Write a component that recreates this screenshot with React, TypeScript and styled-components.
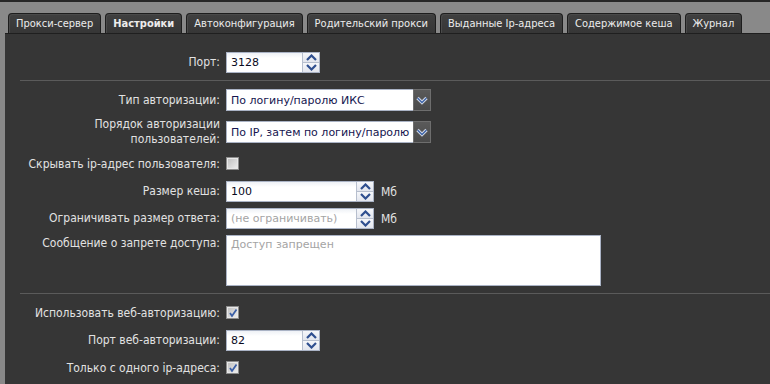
import React from "react";
import styled, { createGlobalStyle } from "styled-components";

const GlobalStyle = createGlobalStyle`
  html, body {
    margin: 0;
    padding: 0;
    background: #898989;
  }
  * {
    box-sizing: border-box;
  }
`;

const tabs = [
  "Прокси-сервер",
  "Настройки",
  "Автоконфигурация",
  "Родительский прокси",
  "Выданные Ip-адреса",
  "Содержимое кеша",
  "Журнал",
];

const Spin = () => (
  <Spinner>
    <SpinHalf>
      <svg width="11" height="7" viewBox="0 0 11 7">
        <path d="M1 6 L5.5 1.5 L10 6" fill="none" stroke="#2f4f8f" strokeWidth="2.2" />
      </svg>
    </SpinHalf>
    <SpinHalf $bottom>
      <svg width="11" height="7" viewBox="0 0 11 7">
        <path d="M1 1 L5.5 5.5 L10 1" fill="none" stroke="#2f4f8f" strokeWidth="2.2" />
      </svg>
    </SpinHalf>
  </Spinner>
);

const NumberField = ({
  value,
  width,
  muted,
}: {
  value: string;
  width: number;
  muted?: boolean;
}) => (
  <NumberBox $width={width}>
    <BoxText $muted={muted}>{value}</BoxText>
    <Spin />
  </NumberBox>
);

const Select = ({ value }: { value: string }) => (
  <SelectBox>
    <SelectText>{value}</SelectText>
    <SelectArrow>
      <svg width="12" height="9" viewBox="0 0 12 9">
        <path d="M1.5 2 L6 6.5 L10.5 2" fill="none" stroke="#d8dde8" strokeWidth="3.2" />
        <path d="M1.5 2 L6 6.5 L10.5 2" fill="none" stroke="#3d64a8" strokeWidth="1.4" />
      </svg>
    </SelectArrow>
  </SelectBox>
);

const Check = ({ checked }: { checked?: boolean }) => (
  <CheckBox>
    {checked && (
      <svg width="10" height="10" viewBox="0 0 10 10">
        <path d="M2 5 L4 8 L8.5 1.5" fill="none" stroke="#3b5fa6" strokeWidth="1.8" />
      </svg>
    )}
  </CheckBox>
);

const App = () => {
  return (
    <Page>
      <GlobalStyle />
      <TabBar>
        {tabs.map((t) => (
          <Tab key={t} $active={t === "Настройки"}>
            {t}
          </Tab>
        ))}
      </TabBar>
      <Panel>
        <Form>
          <Label>Порт:</Label>
          <Field>
            <NumberField value="3128" width={94} />
          </Field>

          <Separator />

          <Label>Тип авторизации:</Label>
          <Field>
            <Select value="По логину/паролю ИКС" />
          </Field>

          <Label>
            Порядок авторизации
            <br />
            пользователей:
          </Label>
          <Field>
            <Select value="По IP, затем по логину/паролю" />
          </Field>

          <Label>Скрывать ip-адрес пользователя:</Label>
          <Field>
            <Check />
          </Field>

          <Label>Размер кеша:</Label>
          <Field>
            <NumberField value="100" width={148} />
            <Unit>Мб</Unit>
          </Field>

          <Label>Ограничивать размер ответа:</Label>
          <Field>
            <NumberField value="(не ограничивать)" width={148} muted />
            <Unit>Мб</Unit>
          </Field>

          <Label $top>Сообщение о запрете доступа:</Label>
          <Field>
            <TextArea readOnly placeholder="Доступ запрещен" />
          </Field>

          <Separator />

          <Label>Использовать веб-авторизацию:</Label>
          <Field>
            <Check checked />
          </Field>

          <Label>Порт веб-авторизации:</Label>
          <Field>
            <NumberField value="82" width={94} />
          </Field>

          <Label>Только с одного ip-адреса:</Label>
          <Field>
            <Check checked />
          </Field>
        </Form>
      </Panel>
    </Page>
  );
};

export default App;

const Page = styled.div`
  min-height: 100vh;
  border-top: 2px solid #262626;
  display: flex;
  flex-direction: column;
  font-family: "DejaVu Sans Condensed", "DejaVu Sans", sans-serif;
  font-stretch: condensed;
`;

const TabBar = styled.div`
  display: flex;
  gap: 4px;
  padding: 11px 0 0 8px;
`;

const Tab = styled.div<{ $active?: boolean }>`
  height: 20px;
  padding: 0 7px;
  display: flex;
  align-items: center;
  font-size: 11px;
  font-weight: ${(p) => (p.$active ? 700 : 400)};
  color: #ececec;
  background: linear-gradient(#404040, #363636);
  border: 1px solid #1d1d1d;
  border-bottom: none;
  border-radius: 4px 4px 0 0;
  box-shadow: inset 1px 1px 0 #4a4a4a;
  white-space: nowrap;
`;

const Panel = styled.div`
  flex: 1;
  margin-left: 5px;
  background: #363636;
  border-top: 1px solid #1f1f1f;
  padding-top: 18px;
`;

const Form = styled.div`
  display: grid;
  grid-template-columns: 215px 1fr;
  column-gap: 6px;
  row-gap: 6px;
  align-items: center;
`;

const Label = styled.div<{ $top?: boolean }>`
  text-align: right;
  align-self: ${(p) => (p.$top ? "start" : "center")};
  padding-top: ${(p) => (p.$top ? "1px" : "0")};
  color: #e2e2e2;
  font-size: 12px;
  line-height: 15px;
  white-space: nowrap;
`;

const Field = styled.div`
  display: flex;
  align-items: center;
  gap: 7px;
  min-height: 21px;
`;

const Separator = styled.div`
  grid-column: 1 / -1;
  height: 1px;
  margin: 1px 0 2px 15px;
  background: #5b5b5b;
`;

const NumberBox = styled.div<{ $width: number }>`
  width: ${(p) => p.$width}px;
  height: 21px;
  display: flex;
  border: 1px solid #aab3c5;
  background: linear-gradient(#eef1f6, #ffffff 5px);
`;

const BoxText = styled.div<{ $muted?: boolean }>`
  flex: 1;
  padding-left: 4px;
  display: flex;
  align-items: center;
  font-family: "DejaVu Sans", sans-serif;
  font-stretch: normal;
  font-size: 11px;
  color: ${(p) => (p.$muted ? "#a4a4a4" : "#0a0a1e")};
  white-space: nowrap;
  overflow: hidden;
`;

const Spinner = styled.div`
  width: 17px;
  display: flex;
  flex-direction: column;
  border-left: 1px solid #b7bfce;
`;

const SpinHalf = styled.div<{ $bottom?: boolean }>`
  flex: 1;
  display: flex;
  align-items: center;
  justify-content: center;
  background: linear-gradient(#f6f7fa, #e3e6ee);
  border-top: ${(p) => (p.$bottom ? "1px solid #b7bfce" : "none")};
`;

const SelectBox = styled.div`
  width: 205px;
  height: 22px;
  display: flex;
`;

const SelectText = styled.div`
  flex: 1;
  display: flex;
  align-items: center;
  padding-left: 4px;
  background: #ffffff;
  border: 1px solid #aab3c5;
  border-right: none;
  font-family: "DejaVu Sans", sans-serif;
  font-stretch: normal;
  font-size: 11px;
  color: #15154f;
  white-space: nowrap;
  overflow: hidden;
`;

const SelectArrow = styled.div`
  width: 18px;
  display: flex;
  align-items: center;
  justify-content: center;
  background: linear-gradient(#5a5a5a, #4a4a4a);
  border: 1px solid #6e6e6e;
`;

const CheckBox = styled.div`
  width: 13px;
  height: 13px;
  margin: 4px 0 5px;
  display: flex;
  align-items: center;
  justify-content: center;
  border: 1px solid #8c8c8c;
  background: linear-gradient(135deg, #bdbdbd, #f0f0f0);
  box-shadow: inset 0 0 0 1px #e8e8e8;
`;

const Unit = styled.span`
  color: #e2e2e2;
  font-size: 12px;
`;

const TextArea = styled.textarea`
  width: 375px;
  height: 51px;
  resize: none;
  border: 1px solid #aab3c5;
  background: #ffffff;
  padding: 2px 4px;
  font-family: "DejaVu Sans", sans-serif;
  font-size: 11px;
  outline: none;

  &::placeholder {
    color: #a4a4a4;
  }
`;
